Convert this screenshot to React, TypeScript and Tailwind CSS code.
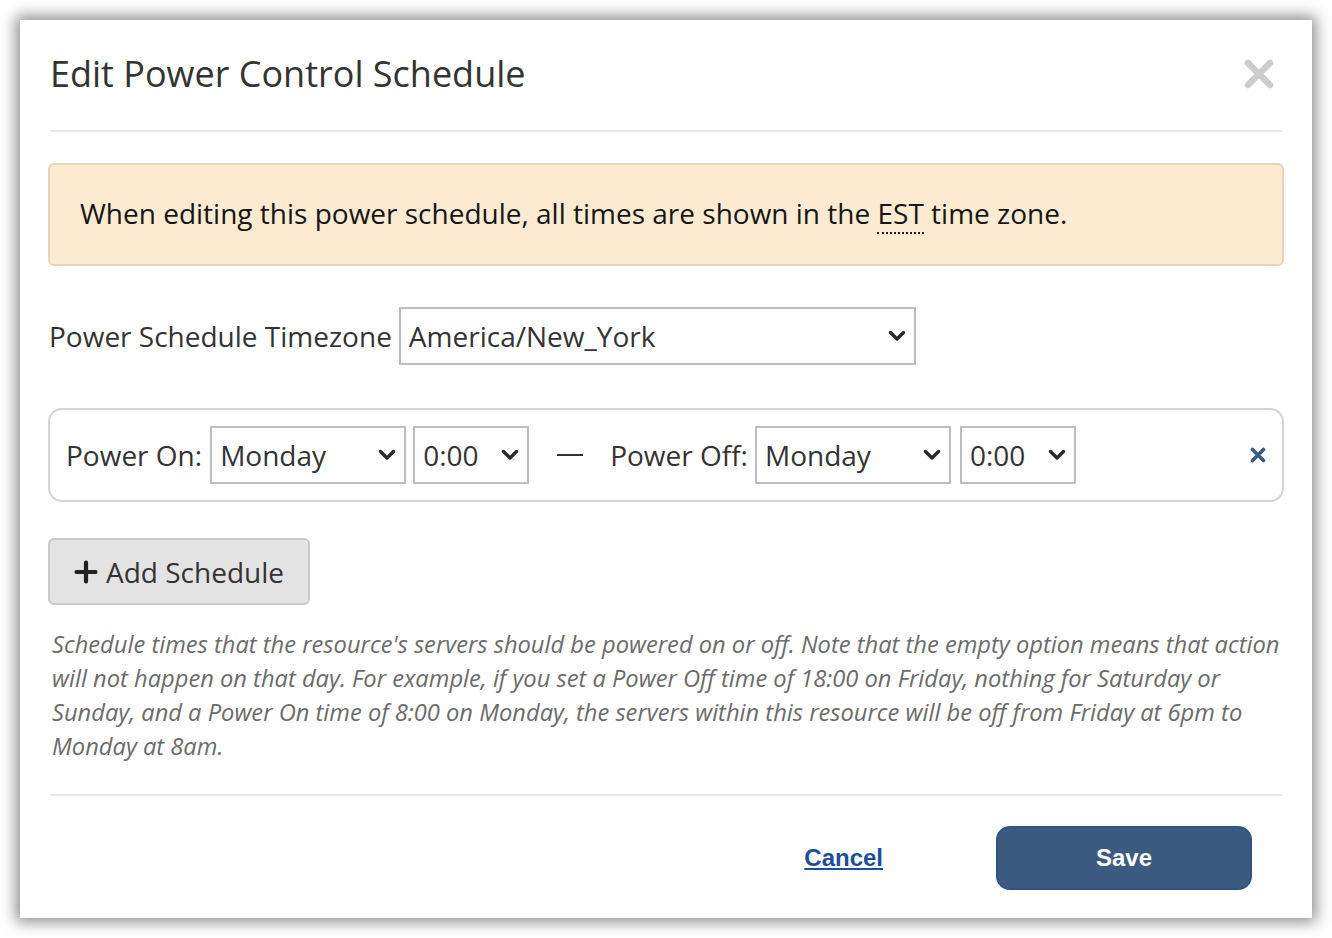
import React from "react";

function Chevron({ className = "" }: { className?: string }) {
  return (
    <svg width="18" height="12" viewBox="0 0 18 12" className={className}>
      <path d="M2.5 2.5 L9 9 L15.5 2.5" fill="none" stroke="#2b2b2b" strokeWidth="3.4" strokeLinecap="round" strokeLinejoin="round" />
    </svg>
  );
}

function FakeSelect({ value, width, pr = "pr-[8px]" }: { value: string; width: string; pr?: string }) {
  return (
    <div className={`${width} h-[58px] border-2 border-[#bdbdbd] bg-white flex items-center justify-between pl-[8px] ${pr} text-[#333]`}>
      <span className="text-[28px] leading-none">{value}</span>
      <Chevron />
    </div>
  );
}

export default function App() {
  return (
    <div className="w-[1332px] h-[938px] bg-white p-[20px]" style={{ fontFamily: '"Open Sans", sans-serif' }}>
      <div className="w-[1292px] h-[898px] bg-white shadow-[0_0_14px_4px_rgba(0,0,0,0.45)] flex flex-col">
        <div className="mx-[30px] h-[112px] border-b-2 border-[#e6e6e6] flex items-center justify-between">
          <h1 className="text-[36px] text-[#333] leading-none pb-[2px]">Edit Power Control Schedule</h1>
          <svg width="32" height="32" viewBox="0 0 32 32" className="mr-[7px] mb-[2px]">
            <path d="M5 5 L27 27 M27 5 L5 27" stroke="#cccccc" strokeWidth="6.5" strokeLinecap="round" />
          </svg>
        </div>

        <div className="px-[28px]">
          <div className="mt-[31px] h-[103px] bg-[#fcebd1] border-2 border-[#e3d6b8] rounded-[6px] flex items-center pl-[30px]">
            <p className="text-[28px] text-[#161616] leading-none pb-[3px]">
              When editing this power schedule, all times are shown in the{" "}
              <abbr className="border-b-2 border-dotted border-[#161616]" style={{ textDecoration: "none" }}>EST</abbr>{" "}
              time zone.
            </p>
          </div>

          <div className="mt-[41px] flex items-center gap-[7px] pl-[1px]">
            <span className="text-[28px] text-[#333]">Power Schedule Timezone</span>
            <FakeSelect value="America/New_York" width="w-[517px]" pr="pr-[8px]" />
          </div>

          <div className="mt-[43px] h-[94px] border-2 border-[#d4d4d4] rounded-[14px] flex items-center pl-[16px] pr-[15px]">
            <span className="text-[28px] text-[#333] mr-[8px]">Power On:</span>
            <FakeSelect value="Monday" width="w-[196px]" pr="pr-[8px]" />
            <div className="w-[7px]" />
            <FakeSelect value="0:00" width="w-[116px]" pr="pr-[8px]" />
            <span className="ml-[28px] mr-[27px] w-[26px] h-[2px] bg-[#333]" />
            <span className="text-[28px] text-[#333] mr-[7px]">Power Off:</span>
            <FakeSelect value="Monday" width="w-[196px]" pr="pr-[8px]" />
            <div className="w-[9px]" />
            <FakeSelect value="0:00" width="w-[116px]" pr="pr-[8px]" />
            <div className="flex-1" />
            <svg width="18" height="18" viewBox="0 0 18 18">
              <path d="M3.5 3.5 L14.5 14.5 M14.5 3.5 L3.5 14.5" stroke="#3a5a82" strokeWidth="3.8" strokeLinecap="round" />
            </svg>
          </div>

          <button className="mt-[36px] h-[67px] w-[262px] bg-[#e3e3e3] border-2 border-[#cacaca] rounded-[6px] flex items-center pl-[24px] text-[28px] text-[#333]">
            <svg width="24" height="24" viewBox="0 0 24 24" className="mr-[8px]">
              <path d="M12 2.5 V21.5 M2.5 12 H21.5" stroke="#222" strokeWidth="4.2" strokeLinecap="round" />
            </svg>
            Add Schedule
          </button>

          <p className="mt-[22px] pl-[4px] pr-[2px] text-[23.7px] leading-[34px] italic text-[#6b6b6b]">
            Schedule times that the resource's servers should be powered on or off. Note that the empty option means that action will not happen on that day. For example, if you set a Power Off time of 18:00 on Friday, nothing for Saturday or Sunday, and a Power On time of 8:00 on Monday, the servers within this resource will be off from Friday at 6pm to Monday at 8am.
          </p>
        </div>

        <div className="mx-[30px] mt-[31px] border-t-2 border-[#e6e6e6]" />

        <div className="flex items-center justify-end mt-[30px] pr-[60px]">
          <a className="text-[24px] font-bold text-[#1b4f9e] underline mr-[113px]" style={{ fontFamily: '"Liberation Sans", Arial, sans-serif' }}>Cancel</a>
          <button className="w-[256px] h-[64px] bg-[#3c5b80] border-2 border-[#2d5486] rounded-[14px] text-white text-[24px] font-bold" style={{ fontFamily: '"Liberation Sans", Arial, sans-serif' }}>
            Save
          </button>
        </div>
      </div>
    </div>
  );
}
